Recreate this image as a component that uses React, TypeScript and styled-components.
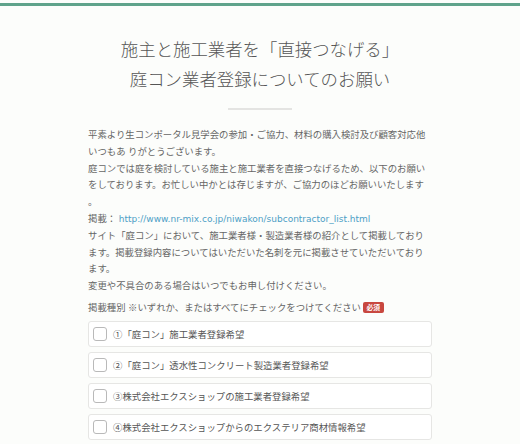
import React from "react";
import styled, { createGlobalStyle } from "styled-components";

const GlobalStyle = createGlobalStyle`
  html, body {
    margin: 0;
    padding: 0;
    background: #fcfdfb;
  }
  body {
    font-family: "Liberation Sans", "Noto Sans CJK JP", sans-serif;
    color: #666;
  }
`;

const TopBar = styled.div`
  margin-top: 3px;
  height: 3px;
  background: #5fa38b;
`;

const Container = styled.main`
  width: 344px;
  margin: 0 auto;
  display: flex;
  flex-direction: column;
`;

const Title = styled.h1`
  margin: 28px 0 0;
  font-family: "Noto Sans CJK JP", sans-serif;
  font-weight: 300;
  font-size: 17.4px;
  line-height: 30px;
  color: #555;
  text-align: center;
  letter-spacing: 0;
`;

const Divider = styled.hr`
  width: 64px;
  height: 2px;
  margin: 14px auto 0;
  border: 0;
  background: #e4e4e2;
`;

const Paragraph = styled.p`
  margin: 17px 0 0;
  font-size: 9.4px;
  line-height: 16.8px;
  color: #666;
  white-space: nowrap;
`;

const Link = styled.a`
  color: #4d9fc6;
  text-decoration: none;
  font-family: "DejaVu Sans", sans-serif;
  font-size: 9px;
`;

const FieldLabel = styled.div`
  margin-top: 4.6px;
  font-size: 9.4px;
  line-height: 16.8px;
  color: #666;
  display: flex;
  align-items: center;
`;

const Required = styled.span`
  display: inline-block;
  margin-left: 2px;
  padding: 0 3.5px;
  height: 11px;
  line-height: 11px;
  font-size: 6.8px;
  font-family: "Noto Sans CJK JP", sans-serif;
  font-weight: 700;
  color: #fff;
  background: #c8473f;
  border-radius: 2px;
`;

const Options = styled.div`
  margin-top: 5px;
  display: flex;
  flex-direction: column;
  gap: 5px;
`;

const OptionRow = styled.label`
  box-sizing: border-box;
  height: 26px;
  display: flex;
  align-items: center;
  gap: 6px;
  padding-left: 4px;
  background: #fff;
  border: 1px solid #e6e6e4;
  border-radius: 3px;
  font-size: 9.4px;
  color: #555;
  white-space: nowrap;
`;

const Box = styled.span`
  box-sizing: border-box;
  width: 14px;
  height: 14px;
  border: 1px solid #b9b9b9;
  border-radius: 3px;
  background: #fff;
  flex: none;
`;

const options = [
  "①「庭コン」施工業者登録希望",
  "②「庭コン」透水性コンクリート製造業者登録希望",
  "③株式会社エクスショップの施工業者登録希望",
  "④株式会社エクスショップからのエクステリア商材情報希望",
];

export default function App() {
  return (
    <>
      <GlobalStyle />
      <TopBar />
      <Container>
        <Title>
          施主と施工業者を「直接つなげる」
          <br />
          庭コン業者登録についてのお願い
        </Title>
        <Divider />
        <Paragraph>
          平素より生コンポータル見学会の参加・ご協力、材料の購入検討及び顧客対応他
          <br />
          いつもあ りがとうございます。
          <br />
          庭コンでは庭を検討している施主と施工業者を直接つなげるため、以下のお願い
          <br />
          をしております。お忙しい中かとは存じますが、ご協力のほどお願いいたします
          <br />
          。
          <br />
          掲載： <Link href="#">http://www.nr-mix.co.jp/niwakon/subcontractor_list.html</Link>
          <br />
          サイト「庭コン」において、施工業者様・製造業者様の紹介として掲載しており
          <br />
          ます。掲載登録内容についてはいただいた名刺を元に掲載させていただいており
          <br />
          ます。
          <br />
          変更や不具合のある場合はいつでもお申し付けください。
        </Paragraph>
        <FieldLabel>
          掲載種別 ※いずれか、またはすべてにチェックをつけてください
          <Required>必須</Required>
        </FieldLabel>
        <Options>
          {options.map((o) => (
            <OptionRow key={o}>
              <Box />
              {o}
            </OptionRow>
          ))}
        </Options>
      </Container>
    </>
  );
}
